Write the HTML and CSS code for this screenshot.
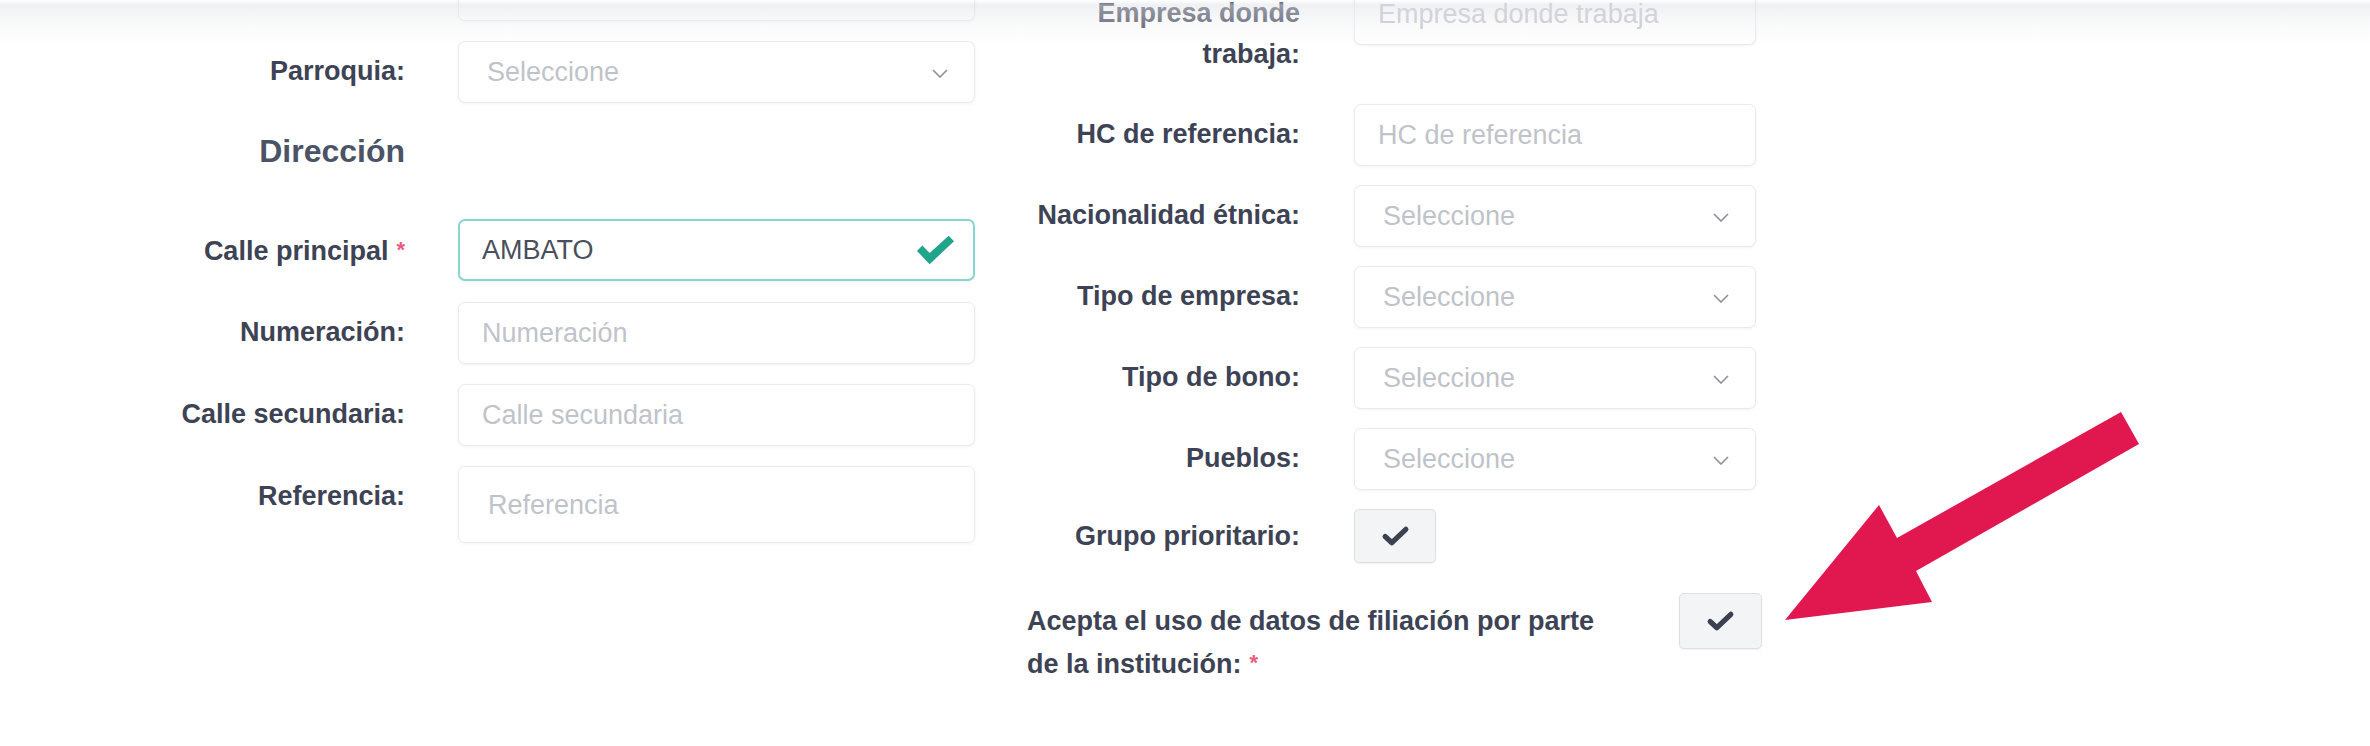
FILE: index.html
```html
<!DOCTYPE html>
<html lang="es">
<head>
    <meta charset="UTF-8">
    <title>Datos de filiación</title>
    <link rel="stylesheet" href="styles.css">
</head>
<body>
<div class="top-shade"></div>

<form action="#" method="post" class="patient-form">

    <div class="patient-form__col patient-form__col--left">

        <div class="form-row">
            <span class="form-row__label"></span>
            <input class="form-input" type="text">
        </div>

        <div class="form-row">
            <label for="parroquia" class="form-row__label">Parroquia:</label>
            <div class="form-select">
                <select id="parroquia" class="form-input form-input--select">
                    <option>Seleccione</option>
                </select>
                <svg class="form-select__arrow" viewBox="0 0 16 9"><polyline points="1,1 8,8 15,1"/></svg>
            </div>
        </div>

        <h5 class="patient-form__section">Dirección</h5>

        <div class="form-row">
            <label for="callePrincipal" class="form-row__label">Calle principal<span class="req">*</span></label>
            <div class="form-valid">
                <input id="callePrincipal" class="form-input form-input--valid" type="text" value="AMBATO">
                <svg class="form-valid__icon" viewBox="0 0 40 30"><path d="M1 16 L6.5 10.5 L14 18 L33.5 0.5 L39 6 L14 29.5 Z"/></svg>
            </div>
        </div>

        <div class="form-row">
            <label for="numeracion" class="form-row__label">Numeración:</label>
            <input id="numeracion" class="form-input" type="text" placeholder="Numeración">
        </div>

        <div class="form-row">
            <label for="calleSecundaria" class="form-row__label">Calle secundaria:</label>
            <input id="calleSecundaria" class="form-input" type="text" placeholder="Calle secundaria">
        </div>

        <div class="form-row">
            <label for="referencia" class="form-row__label">Referencia:</label>
            <textarea id="referencia" class="form-input form-input--area" placeholder="Referencia"></textarea>
        </div>

    </div>

    <div class="patient-form__col patient-form__col--right">

        <div class="form-row">
            <label for="empresa" class="form-row__label">Empresa donde trabaja:</label>
            <input id="empresa" class="form-input" type="text" placeholder="Empresa donde trabaja">
        </div>

        <div class="form-row">
            <label for="hcReferencia" class="form-row__label">HC de referencia:</label>
            <input id="hcReferencia" class="form-input" type="text" placeholder="HC de referencia">
        </div>

        <div class="form-row">
            <label for="nacionalidad" class="form-row__label">Nacionalidad étnica:</label>
            <div class="form-select">
                <select id="nacionalidad" class="form-input form-input--select">
                    <option>Seleccione</option>
                </select>
                <svg class="form-select__arrow" viewBox="0 0 16 9"><polyline points="1,1 8,8 15,1"/></svg>
            </div>
        </div>

        <div class="form-row">
            <label for="tipoEmpresa" class="form-row__label">Tipo de empresa:</label>
            <div class="form-select">
                <select id="tipoEmpresa" class="form-input form-input--select">
                    <option>Seleccione</option>
                </select>
                <svg class="form-select__arrow" viewBox="0 0 16 9"><polyline points="1,1 8,8 15,1"/></svg>
            </div>
        </div>

        <div class="form-row">
            <label for="tipoBono" class="form-row__label">Tipo de bono:</label>
            <div class="form-select">
                <select id="tipoBono" class="form-input form-input--select">
                    <option>Seleccione</option>
                </select>
                <svg class="form-select__arrow" viewBox="0 0 16 9"><polyline points="1,1 8,8 15,1"/></svg>
            </div>
        </div>

        <div class="form-row">
            <label for="pueblos" class="form-row__label">Pueblos:</label>
            <div class="form-select">
                <select id="pueblos" class="form-input form-input--select">
                    <option>Seleccione</option>
                </select>
                <svg class="form-select__arrow" viewBox="0 0 16 9"><polyline points="1,1 8,8 15,1"/></svg>
            </div>
        </div>

        <div class="form-row form-row--check">
            <span class="form-row__label">Grupo prioritario:</span>
            <label class="check-btn">
                <svg viewBox="0 0 28 21"><polyline points="4,11 10.5,17 24,4"/></svg>
            </label>
        </div>

        <div class="consent">
            <span class="consent__text">Acepta el uso de datos de filiación por parte de la institución:<span class="req">*</span></span>
            <label class="check-btn check-btn--consent">
                <svg viewBox="0 0 28 21"><polyline points="4,11 10.5,17 24,4"/></svg>
            </label>
        </div>

    </div>

</form>

<svg class="annotation" viewBox="0 0 2370 746">
    <polygon points="2121,412 2139,444 1916,571 1932,602 1785,620 1879,505 1897,538"/>
</svg>
</body>
</html>
```

FILE: styles.css
```css
html,
body {
    margin: 0;
    height: 100%;
    background-color: #fff;
}

body {
    position: relative;
    overflow: hidden;
    font-family: "Liberation Sans", Arial, sans-serif;
    color: #3d4354;
}

.top-shade {
    position: absolute;
    top: 0;
    left: 0;
    right: 0;
    height: 46px;
    background: linear-gradient(to bottom, rgba(255,255,255,0) 0, rgba(226,228,233,.55) 5px, rgba(238,239,242,.35) 22px, rgba(255,255,255,0) 46px);
    pointer-events: none;
    z-index: 2;
}

.patient-form {
    display: flex;
    align-items: flex-start;
    padding-left: 105px;
    margin-top: -41px;
}

.patient-form__col--left {
    width: 870px;
}
.patient-form__col--right {
    width: 735px;
    margin-left: 52px;
    padding-top: 24px;
}

.form-row {
    display: grid;
    grid-template-columns: 300px 517px;
    column-gap: 53px;
    align-items: start;
    margin-bottom: 20px;
}
.patient-form__col--right .form-row {
    grid-template-columns: 273px 402px;
    column-gap: 54px;
    margin-bottom: 19px;
}

.form-row__label {
    padding: 10px 0;
    font-size: 27px;
    font-weight: bold;
    line-height: 41px;
    text-align: right;
}

.form-row--check {
    align-items: center;
}
.form-row--check .form-row__label {
    padding: 0;
}

.req {
    margin-left: 8px;
    font-size: 22px;
    font-weight: bold;
    color: #ee5a82;
    vertical-align: 3px;
}

.patient-form__section {
    width: 300px;
    margin: 29px 0 49px;
    font-size: 32px;
    font-weight: bold;
    line-height: 38px;
    text-align: right;
    color: #4b5366;
}

.form-input {
    box-sizing: border-box;
    display: block;
    width: 100%;
    height: 62px;
    margin: 0;
    padding: 0 23px;
    border: 1px solid #e8eaee;
    border-radius: 7px;
    background-color: #fff;
    box-shadow: 0 1px 3px rgba(40, 50, 70, .06);
    font-family: "Liberation Sans", Arial, sans-serif;
    font-size: 27px;
    color: #4a4f5c;
    outline: none;
}
.form-input::placeholder {
    color: #bfc3ca;
}

.form-input--select {
    -webkit-appearance: none;
    appearance: none;
    padding-left: 28px;
    color: #bfc3ca;
}

.form-input--area {
    height: 77px;
    padding: 18px 29px;
    line-height: 41px;
    resize: none;
}

.form-input--valid {
    border: 2px solid #86d6cf;
    padding-left: 22px;
}

.form-select,
.form-valid {
    position: relative;
}

.form-select__arrow {
    position: absolute;
    top: 28px;
    right: 27px;
    width: 16px;
    height: 9px;
    fill: none;
    stroke: #8b909a;
    stroke-width: 1.6;
}

.form-valid__icon {
    position: absolute;
    top: 16px;
    right: 20px;
    width: 39px;
    height: 30px;
    fill: #20a58c;
}

.check-btn {
    box-sizing: border-box;
    display: flex;
    justify-content: center;
    align-items: center;
    width: 82px;
    height: 54px;
    border: 1px solid #dcdfe4;
    border-radius: 5px;
    background-color: #f3f4f6;
    box-shadow: 0 1px 2px rgba(0, 0, 0, .06);
    cursor: pointer;
}
.check-btn svg {
    width: 29px;
    height: 22px;
    fill: none;
    stroke: #3b4151;
    stroke-width: 5;
    stroke-linecap: round;
    stroke-linejoin: round;
}
.check-btn--consent {
    width: 83px;
    height: 56px;
    margin-left: 63px;
}

.consent {
    display: flex;
    align-items: flex-start;
    margin-top: 30px;
}
.consent__text {
    width: 590px;
    padding-top: 7px;
    font-size: 27px;
    font-weight: bold;
    line-height: 42px;
}

.annotation {
    position: absolute;
    top: 0;
    left: 0;
    width: 2370px;
    height: 746px;
    fill: #e1174f;
    pointer-events: none;
    z-index: 3;
}
```
